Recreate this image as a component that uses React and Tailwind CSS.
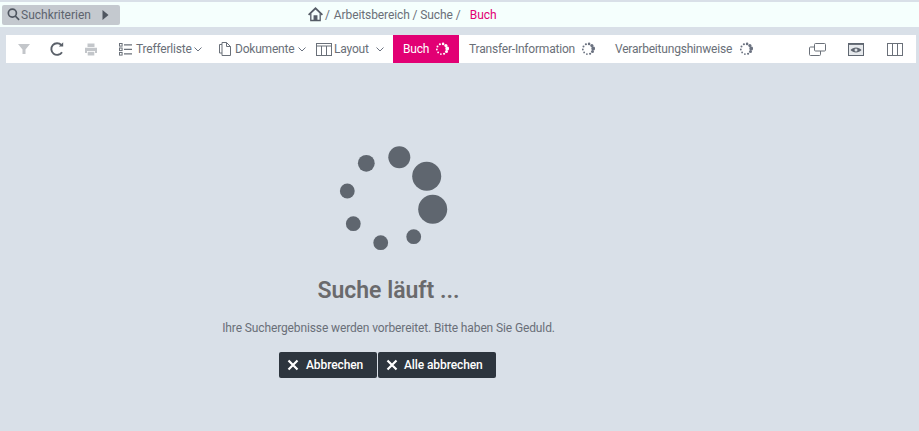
import React from "react";

function Dots({ color = "#6b7280", size = 14 }) {
  const pts = [];
  const radii = [1.9, 1.5, 1.1, 0.9, 0.9, 0.9, 1, 1.1, 1.3, 1.6];
  for (let i = 0; i < 10; i++) {
    const a = (i / 10) * Math.PI * 2 - 0.1;
    pts.push(<circle key={i} cx={7 + 5.2 * Math.cos(a)} cy={7 + 5.2 * Math.sin(a)} r={radii[i]} fill={color} />);
  }
  return (
    <svg width={size} height={size} viewBox="0 0 14 14" className="shrink-0 block">
      {pts}
    </svg>
  );
}

function Chevron() {
  return (
    <svg width="8" height="5" viewBox="0 0 8 5" fill="none" stroke="#6b7280" strokeWidth="1" className="shrink-0 block">
      <path d="M0.5 0.5 L4 4 L7.5 0.5" />
    </svg>
  );
}

function TableIcon({ w = 16, h = 13 }) {
  return (
    <svg width={w} height={h} viewBox="0 0 16 13" fill="none" stroke="#6a7079" strokeWidth="1" className="shrink-0">
      <rect x="0.5" y="0.5" width="15" height="12" />
      <path d="M0.5 3H15.5M5.5 3V12.5M10.5 3V12.5" />
    </svg>
  );
}

export default function App() {
  return (
    <div className="w-[919px] h-[431px] overflow-hidden bg-[#d9e0e8] flex flex-col font-['Roboto','Noto_Sans',sans-serif] text-[#6a6f78]">
      <div className="h-[25px] mt-[2px] bg-[#f5fffd] flex items-center relative">
        <div className="ml-[2px] w-[118px] h-[20px] bg-[#c4c9cf] rounded-[2px] flex items-center pl-[4px]">
          <svg width="15" height="15" viewBox="0 0 16 16" fill="none" stroke="#4f5660" strokeWidth="1.8" className="shrink-0">
            <circle cx="6.8" cy="6.5" r="4.3" />
            <path d="M10 9.8 L14 13.7" />
          </svg>
          <span className="text-[12px] w-[70px] text-[#5d646e] whitespace-nowrap">Suchkriterien</span>
          <svg width="7" height="10" viewBox="0 0 7 10" className="ml-[11px]">
            <path d="M0.5 0 L6.5 5 L0.5 10Z" fill="#4f5660" />
          </svg>
        </div>
        <div className="absolute left-[308px] top-[4px] flex items-center text-[12px] tracking-[-0.1px] h-[17px]">
          <svg width="15" height="15" viewBox="0 0 15 15" fill="none" stroke="#555c66" strokeWidth="1.3" className="shrink-0">
            <path d="M0.6 7.8 L7.5 1.3 L14.4 7.8" strokeWidth="1.8" />
            <path d="M2.8 6.5V13.5H12.2V6.5" />
            <path d="M6.2 13.5V9H8.8V13.5" fill="#555c66" />
          </svg>
          <span className="ml-[2px]">/</span>
          <span className="ml-[4px] w-[124px] whitespace-nowrap">Arbeitsbereich / Suche /</span>
          <span className="ml-[12px] text-[#e20074]">Buch</span>
        </div>
      </div>

      <div className="mt-[8px] mx-[6px] h-[28px] w-[910px] bg-white flex items-center text-[12px] tracking-[-0.2px] whitespace-nowrap">
        <div className="w-[17px] ml-[9px] shrink-0 flex justify-center">
          <svg width="14" height="12" viewBox="0 0 14 12">
            <path d="M1 1H13L8.5 6.5V11L5.5 11V6.5Z" fill="#c3c6ca" />
          </svg>
        </div>
        <div className="ml-[16px] w-[17px] shrink-0 flex justify-center">
          <svg width="16" height="16" viewBox="0 0 16 16" fill="none" stroke="#5a6069" strokeWidth="1.9">
            <path d="M13 11.2 A5.8 5.8 0 1 1 12.3 4" />
            <path d="M14.2 1.2V5.6H9.8Z" fill="#5a6069" stroke="none" />
          </svg>
        </div>
        <div className="ml-[17px] w-[17px] shrink-0 flex justify-center">
          <svg width="14" height="13" viewBox="0 0 14 13" fill="#c3c6ca">
            <path d="M3.5 0.5H10.5V4H3.5Z" />
            <path d="M1 4.8H13V10H11V8H3V10H1Z" />
            <path d="M3.7 8.8H10.3V12.5H3.7Z" />
          </svg>
        </div>
        <div className="ml-[20px] flex items-center">
          <svg width="13" height="13" viewBox="0 0 13 13" fill="none" stroke="#6a7079" strokeWidth="1" className="shrink-0">
            <rect x="0.5" y="0.5" width="2.6" height="2.6" />
            <rect x="0.5" y="5" width="2.6" height="2.6" />
            <rect x="0.5" y="9.5" width="2.6" height="2.6" />
            <path d="M5 1.8H13M5 6.3H13M5 10.8H13" strokeWidth="1.3" />
          </svg>
          <span className="ml-[4px] w-[55px]">Trefferliste</span>
          <span className="ml-[3px]"><Chevron /></span>
        </div>
        <div className="ml-[17px] flex items-center">
          <svg width="12" height="14" viewBox="0 0 12 14" fill="none" stroke="#6a7079" strokeWidth="1" className="shrink-0">
            <path d="M3 2.5V0.5H7.5L11.5 4.5V13.5H3V11" />
            <path d="M3 2.5H0.5V11H3V2.5M7.5 0.5V4.5H11.5" />
          </svg>
          <span className="ml-[4px] w-[60px]">Dokumente</span>
          <span className="ml-[3px]"><Chevron /></span>
        </div>
        <div className="ml-[10px] flex items-center">
          <TableIcon />
          <span className="ml-[2px] w-[38px]">Layout</span>
          <span className="ml-[4px]"><Chevron /></span>
        </div>
        <div className="ml-[9px] h-[28px] w-[66px] bg-[#e20074] text-white flex items-center pl-[10px]">
          <span className="w-[27px]">Buch</span>
          <span className="ml-[5px]"><Dots color="#ffffff" /></span>
        </div>
        <span className="ml-[10px] w-[107px]">Transfer-Information</span>
        <span className="ml-[5px]"><Dots /></span>
        <span className="ml-[20px] w-[118px]">Verarbeitungshinweise</span>
        <span className="ml-[6px]"><Dots /></span>
        <div className="ml-auto flex items-center gap-[22px] mr-[13px]">
          <svg width="17" height="13" viewBox="0 0 17 13" fill="none" stroke="#6a7079" strokeWidth="1" className="shrink-0">
            <rect x="5.5" y="0.5" width="11" height="7.5" rx="1" />
            <path d="M5.5 4H1.5A1 1 0 0 0 0.5 5V11.5A1 1 0 0 0 1.5 12.5H10.5A1 1 0 0 0 11.5 11.5V8" />
          </svg>
          <svg width="16" height="13" viewBox="0 0 16 13" fill="none" stroke="#5f6670" strokeWidth="1" className="shrink-0">
            <rect x="0.5" y="0.5" width="15" height="12" fill="#e6e9ec" />
            <path d="M0.5 1.2H15.5" strokeWidth="1.4" />
            <path d="M2.5 7 C5 3.6 11 3.6 13.5 7 C11 10.2 5 10.2 2.5 7Z" fill="#5f6670" stroke="none" />
            <circle cx="8" cy="6.9" r="1.5" fill="#dfe2e6" stroke="none" />
          </svg>
          <svg width="16" height="13" viewBox="0 0 16 13" fill="none" stroke="#6a7079" strokeWidth="1" className="ml-[1px] shrink-0">
            <rect x="0.5" y="0.5" width="15" height="12" />
            <path d="M5.5 0.5V12.5M10.5 0.5V12.5" />
          </svg>
        </div>
      </div>

      <div className="w-[775px] flex-1 flex flex-col items-center">
        <svg width="120" height="116" viewBox="0 0 120 116" className="mt-[82px] shrink-0 fill-[#5f666f]">
          <circle cx="71.3" cy="12.3" r="11" />
          <circle cx="98.7" cy="31.3" r="14.5" />
          <circle cx="104.7" cy="64.3" r="14.5" />
          <circle cx="85.7" cy="91.7" r="7.4" />
          <circle cx="52.7" cy="97.7" r="7.4" />
          <circle cx="25.3" cy="78.7" r="7.4" />
          <circle cx="19.3" cy="46" r="7.4" />
          <circle cx="38.3" cy="18.3" r="8.4" />
        </svg>
        <h1 className="mt-[14px] ml-[2px] text-[23px] leading-[32px] font-semibold text-[#6a6a6c] whitespace-nowrap">Suche läuft ...</h1>
        <p className="mt-[12px] ml-[2px] text-[12px] tracking-[-0.12px] leading-[18px] whitespace-nowrap">Ihre Suchergebnisse werden vorbereitet. Bitte haben Sie Geduld.</p>
        <div className="mt-[15px] flex gap-[1px] text-[12px] tracking-[-0.1px] font-medium text-white">
          <button className="h-[26px] w-[98px] bg-[#2d353e] rounded-[2px] flex items-center pl-[8px]">
            <svg width="12" height="12" viewBox="0 0 12 12" stroke="#ffffff" strokeWidth="2.2" className="shrink-0">
              <path d="M1.5 1.5L10.5 10.5M10.5 1.5L1.5 10.5" />
            </svg>
            <span className="ml-[7px]">Abbrechen</span>
          </button>
          <button className="h-[26px] w-[118px] bg-[#2d353e] rounded-[2px] flex items-center pl-[8px]">
            <svg width="12" height="12" viewBox="0 0 12 12" stroke="#ffffff" strokeWidth="2.2" className="shrink-0">
              <path d="M1.5 1.5L10.5 10.5M10.5 1.5L1.5 10.5" />
            </svg>
            <span className="ml-[6px]">Alle abbrechen</span>
          </button>
        </div>
      </div>
    </div>
  );
}
